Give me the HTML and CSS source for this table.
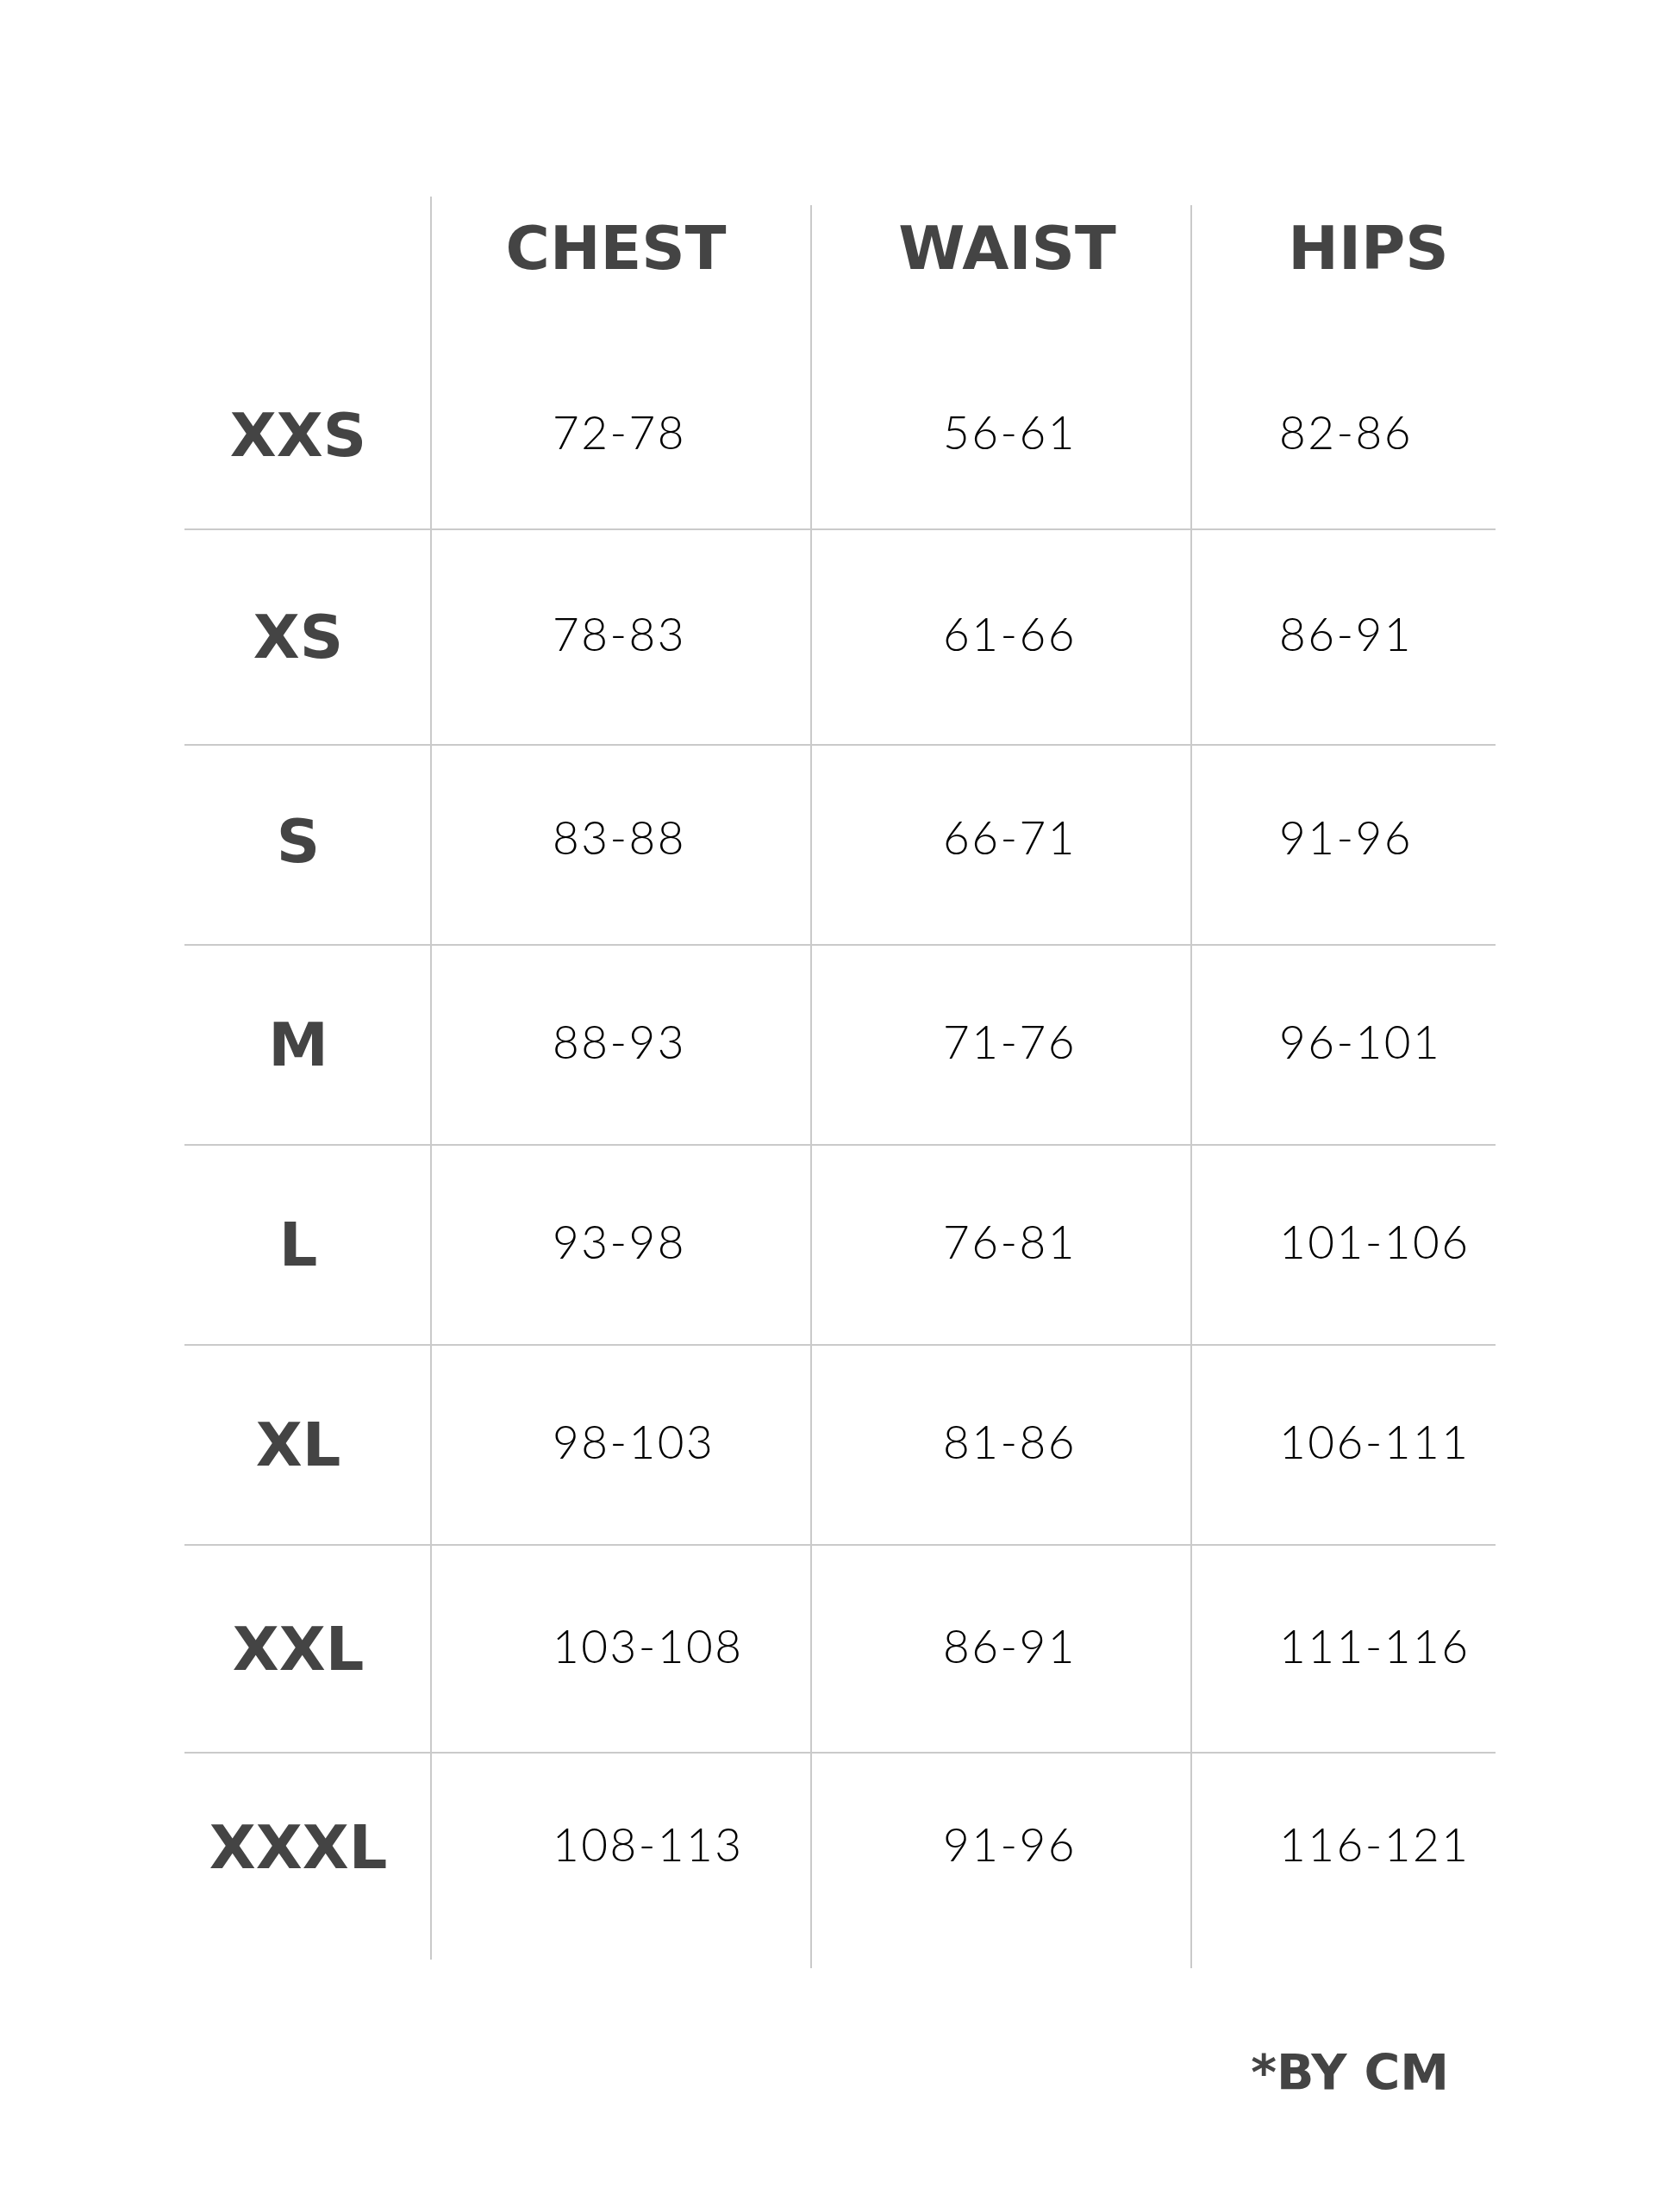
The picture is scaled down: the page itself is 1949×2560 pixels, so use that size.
FILE: index.html
```html
<!DOCTYPE html>
<html lang="en">
<head>
<meta charset="utf-8">
<title>Size Chart</title>
<link rel="stylesheet" href="styles.css">
</head>
<body>
<main class="page">
  <div class="chart">
    <div class="cell head"></div>
    <div class="cell head head-chest lined">CHEST</div>
    <div class="cell head head-waist lined inset-top">WAIST</div>
    <div class="cell head head-hips lined inset-top">HIPS</div>

    <div class="cell size ruled">XXS</div>
    <div class="cell num c2 lined ruled">72-78</div>
    <div class="cell num c3 lined ruled">56-61</div>
    <div class="cell num c4 lined ruled">82-86</div>

    <div class="cell size ruled">XS</div>
    <div class="cell num c2 lined ruled">78-83</div>
    <div class="cell num c3 lined ruled">61-66</div>
    <div class="cell num c4 lined ruled">86-91</div>

    <div class="cell size ruled row-s">S</div>
    <div class="cell num c2 lined ruled row-s">83-88</div>
    <div class="cell num c3 lined ruled row-s">66-71</div>
    <div class="cell num c4 lined ruled row-s">91-96</div>

    <div class="cell size ruled">M</div>
    <div class="cell num c2 lined ruled">88-93</div>
    <div class="cell num c3 lined ruled">71-76</div>
    <div class="cell num c4 lined ruled">96-101</div>

    <div class="cell size ruled">L</div>
    <div class="cell num c2 lined ruled">93-98</div>
    <div class="cell num c3 lined ruled">76-81</div>
    <div class="cell num c4 lined ruled">101-106</div>

    <div class="cell size ruled">XL</div>
    <div class="cell num c2 lined ruled">98-103</div>
    <div class="cell num c3 lined ruled">81-86</div>
    <div class="cell num c4 lined ruled">106-111</div>

    <div class="cell size ruled">XXL</div>
    <div class="cell num c2 lined ruled">103-108</div>
    <div class="cell num c3 lined ruled">86-91</div>
    <div class="cell num c4 lined ruled">111-116</div>

    <div class="cell size">XXXL</div>
    <div class="cell num c2 lined">108-113</div>
    <div class="cell num c3 lined">91-96</div>
    <div class="cell num c4 lined">116-121</div>

    <div class="cell tail"></div>
    <div class="cell tail lined inset-bottom"></div>
    <div class="cell tail lined"></div>
    <div class="cell tail lined"></div>
  </div>
  <p class="note">*BY CM</p>
</main>
</body>
</html>
```

FILE: styles.css
```css
html, body {
  margin: 0;
  padding: 0;
  background: #ffffff;
}

.page {
  width: 1949px;
  padding-top: 228px;
  box-sizing: border-box;
}

.chart {
  margin-left: 214px;
  width: 1521px;
  display: grid;
  grid-template-columns: 286px 441px 441px 353px;
  grid-template-rows: 169px 218px 250px 232px 232px 232px 232px 241px 218px 31px;
}

.cell {
  display: flex;
  align-items: center;
  box-sizing: border-box;
  line-height: 1;
  white-space: nowrap;
  min-width: 0;
}

.lined {
  border-left: 2px solid #cacaca;
  margin-left: -1px;
}

.inset-top {
  margin-top: 10px;
}

.inset-bottom {
  margin-bottom: 10px;
}

.ruled {
  border-bottom: 2px solid #cacaca;
}

.head {
  align-items: flex-start;
  justify-content: center;
  padding-top: 25px;
  font-family: "DejaVu Sans", sans-serif;
  font-weight: 700;
  font-size: 70px;
  color: #444444;
}
.head.inset-top { padding-top: 15px; }
.head-chest { padding-right: 13px; }
.head-waist { padding-left: 13px; }
.head-hips  { padding-left: 57px; }

.size {
  justify-content: center;
  padding-right: 22px;
  font-family: "DejaVu Sans", sans-serif;
  font-weight: 700;
  font-size: 70px;
  color: #444444;
}

.num {
  justify-content: flex-start;
  padding-bottom: 9px;
  font-family: "Lato", sans-serif;
  font-weight: 300;
  font-size: 53px;
  letter-spacing: 2.5px;
  color: #000000;
}
.c2 { padding-left: 140px; }
.c3 { padding-left: 152px; }
.c4 { padding-left: 101px; }

.row-s { padding-bottom: 8px; }
.num.row-s { padding-bottom: 20px; }

.note {
  margin: 93px 0 0 0;
  width: 1681px;
  text-align: right;
  font-family: "DejaVu Sans", sans-serif;
  font-weight: 700;
  font-size: 57px;
  line-height: 1;
  color: #444444;
}
```
